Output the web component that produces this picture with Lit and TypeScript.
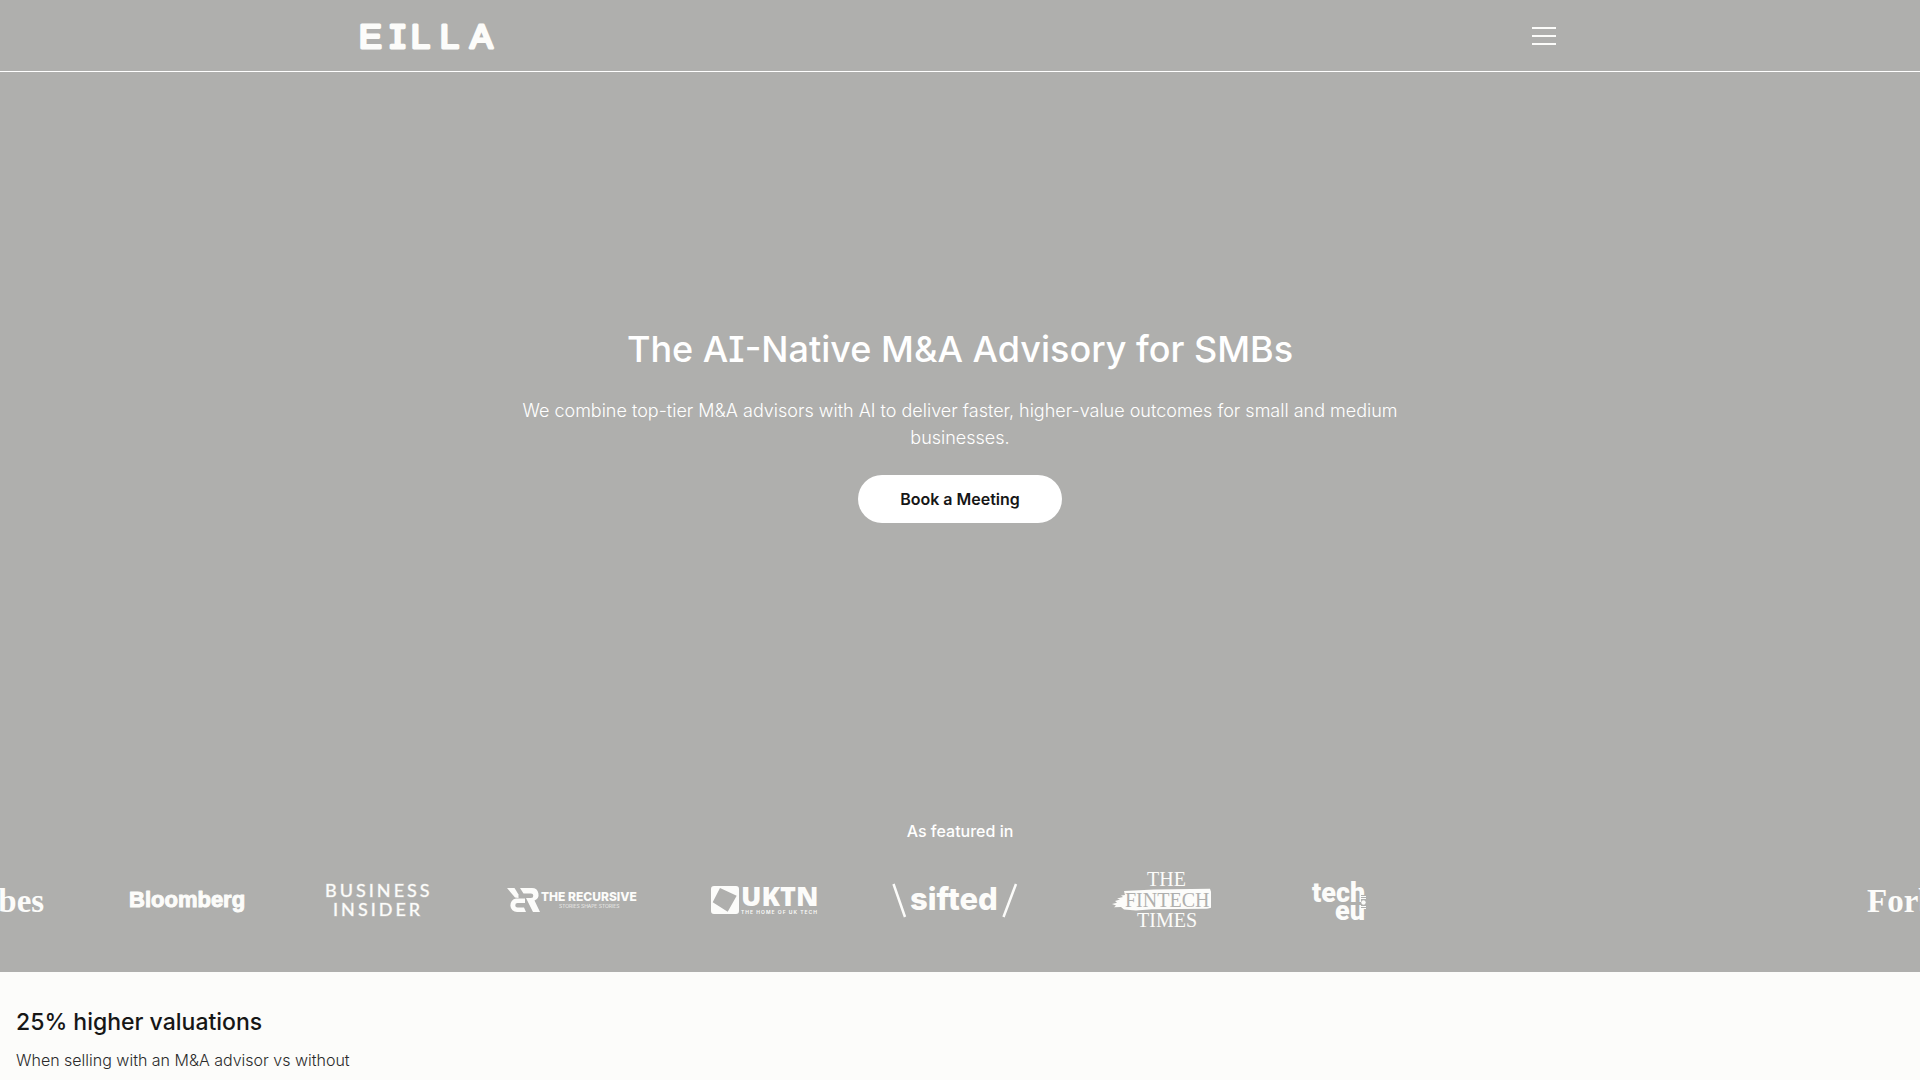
import { LitElement, html, css, svg } from "lit";
import { customElement } from "lit/decorators.js";

const logo = (label: string, body: unknown) => html`
  <svg class="logo" viewBox="0 0 192 80" role="img" aria-label=${label}>${body}</svg>
`;

const forbes = () => logo("Forbes", svg`<text class="forbes" x="48" y="52">Forbes</text>`);

const bloomberg = () => logo("Bloomberg", svg`<text class="bloomberg" x="38" y="47">Bloomberg</text>`);

const insider = () => logo("Business Insider", svg`
  <text class="insider" x="42" y="37">BUSINESS</text>
  <text class="insider" x="50" y="56">INSIDER</text>
`);

const recursive = () => logo("The Recursive", svg`
  <path d="M32 28h7.500l4 6.500v3.500l-3.500-.500z" />
  <path d="M45 28h12a6.500 6.500 0 0 1 2.500 12.500l5.500 11.500h-7l-7-14h5a2.300 2.300 0 0 0 0-4.600h-7.500z" />
  <path d="M41 38.500h9v4.500h-7.500a2 2 0 0 0 0 4.500h6.500l2 4.500h-9a6.800 6.800 0 0 1-1-13.500z" />
  <text class="recursive" x="66" y="41">THE RECURSIVE</text>
  <text class="recursive-sub" x="84" y="48">STORIES SHAPE STORIES</text>
`);

const uktn = () => logo("UKTN", svg`
  <path fill-rule="evenodd" d="M47 26h22a3 3 0 0 1 3 3v22a3 3 0 0 1-3 3H47a3 3 0 0 1-3-3V29a3 3 0 0 1 3-3zM53 28l-7.300 14.300 15 9.400 9-16z" />
  <text class="uktn" x="74" y="46">UKTN</text>
  <text class="uktn-sub" x="74" y="54">THE HOME OF UK TECH</text>
`);

const sifted = () => logo("Sifted", svg`
  <path class="slash" d="M34.500 24L46 57M157 24L144.500 57" />
  <text class="sifted" x="51" y="50">sifted</text>
`);

const fintech = () => logo("The Fintech Times", svg`
  <text class="fintech" x="96" y="26">THE</text>
  <path d="M73 31l30-1.500 56-.700 1 3v16l-4 1-55 .500-16 1.200-12-1-3-2.500-7 .300 2-1.800-4-1.500 5-1.300-2-1.700 5-1.500-3-1 6-1.500-2-1.500 4-.500z" />
  <text class="fintech knockout" x="74" y="47">FINTECH</text>
  <text class="fintech" x="86" y="67">TIMES</text>
`);

const techeu = () => logo("Tech.eu", svg`
  <text class="techeu" x="69" y="42">tech</text>
  <text class="techeu" x="92" y="60">eu</text>
  <path class="knockout" d="M118 35h6v14h-6z" />
  <path d="M118 36h5v1h-5zM118 38h5v1h-5zM118 46h5v1h-5zM118 48h5v1h-5z" />
  <circle cx="120.500" cy="42.500" r="2.200" />
`);

@customElement("app-root")
export class AppRoot extends LitElement {
  static styles = css`
    :host {
      --stone: #afafad;
      --paper: #fcfcfa;
      --ink: #161616;
      display: block;
      font-family: Inter, "Liberation Sans", sans-serif;
      color: var(--ink);
      background: var(--paper);
      height: 100vh;
      overflow: hidden;
    }
    .hero {
      display: flex;
      flex-direction: column;
      min-height: 90vh;
      background: var(--stone);
      color: #fff;
      overflow: hidden;
    }
    .bar {
      border-bottom: 1px solid #fff;
    }
    .bar-inner {
      display: flex;
      align-items: center;
      justify-content: space-between;
      max-width: 1200px;
      height: 71px;
      margin: 0 auto;
    }
    .brand {
      display: block;
      height: 32px;
    }
    .wordmark {
      display: block;
      width: 144px;
      height: 32px;
      overflow: visible;
    }
    .wordmark-text {
      font: 400 34px "Liberation Sans", sans-serif;
      fill: var(--paper);
      stroke: var(--paper);
      stroke-width: 3px;
      stroke-linejoin: round;
    }
    .slab {
      font: 400 32px "DejaVu Sans Mono", monospace;
    }
    .menu {
      display: flex;
      padding: 4px;
      border: 0;
      background: none;
      color: var(--paper);
      cursor: pointer;
    }
    .menu-icon {
      width: 24px;
      height: 24px;
      fill: currentColor;
    }
    .pitch {
      flex: 1;
      display: flex;
      flex-direction: column;
      align-items: center;
      justify-content: center;
      gap: 24px;
      padding: 0 16px 4px;
      text-align: center;
    }
    .title {
      margin: 0;
      font-size: 36px;
      line-height: 48px;
      font-weight: 500;
      font-feature-settings: "cv08";
    }
    .lead {
      margin: 0;
      max-width: 896px;
      font-size: 18px;
      line-height: 27px;
      font-weight: 300;
    }
    .cta {
      display: flex;
      align-items: center;
      height: 48px;
      padding: 0 42px;
      border-radius: 24px;
      background: #fff;
      color: var(--ink);
      font-size: 16px;
      font-weight: 600;
      text-decoration: none;
    }
    .featured {
      display: flex;
      flex-direction: column;
      gap: 17px;
      padding: 40px 0 32px;
    }
    .featured-label {
      margin: 0;
      font-size: 16px;
      line-height: 24px;
      font-weight: 500;
      text-align: center;
    }
    .logos {
      display: grid;
      grid-template-columns: repeat(11, 10%);
      margin: 0 0 0 -101px;
      padding: 0;
      width: 100%;
      list-style: none;
    }
    .slot {
      display: flex;
      justify-content: center;
      height: 80px;
    }
    .logo {
      flex: none;
      width: 192px;
      height: 80px;
      fill: var(--paper);
    }
    .forbes {
      font: 700 33px "Liberation Serif", serif;
    }
    .bloomberg {
      font: 700 22px "Liberation Sans", sans-serif;
      stroke: var(--paper);
      stroke-width: 1px;
      stroke-linejoin: round;
    }
    .insider {
      font: 500 18px Lato, sans-serif;
      letter-spacing: 3px;
      stroke: var(--paper);
      stroke-width: 1px;
      stroke-opacity: 0.3;
    }
    .recursive {
      font: 800 12px Inter, sans-serif;
    }
    .recursive-sub {
      font: 300 5px Inter, sans-serif;
    }
    .uktn {
      font: 800 27px "Open Sans", sans-serif;
    }
    .uktn-sub {
      font: 600 5px Inter, sans-serif;
      letter-spacing: 1px;
    }
    .slash {
      fill: none;
      stroke: var(--paper);
      stroke-width: 2.5px;
    }
    .sifted {
      font: 800 31px Inter, sans-serif;
    }
    .fintech {
      font: 400 20px "Liberation Serif", serif;
    }
    .knockout {
      fill: var(--stone);
    }
    .techeu {
      font: 900 27px Roboto, sans-serif;
    }
    .stat {
      display: flex;
      flex-direction: column;
      gap: 8px;
      padding: 32px 16px;
    }
    .stat-title {
      margin: 0;
      font-size: 23px;
      line-height: 36px;
      font-weight: 500;
    }
    .stat-text {
      margin: 0;
      font-size: 16px;
      line-height: 24px;
      font-weight: 300;
      color: #2b2b2b;
    }
  `;

  render() {
    const slots = [forbes, bloomberg, insider, recursive, uktn, sifted, fintech, techeu, null, null, forbes];
    return html`
      <section class="hero">
        <header class="bar">
          <div class="bar-inner">
            <a class="brand" href="#" aria-label="EILLA">
              <svg class="wordmark" viewBox="0 0 144 32">
                <text class="wordmark-text" y="28"
                  ><tspan x="-1">E</tspan><tspan class="slab" x="28">I</tspan><tspan x="51">L</tspan
                  ><tspan x="80">L</tspan><tspan x="110">A</tspan></text
                >
              </svg>
            </a>
            <button class="menu" type="button" aria-label="Menu">
              <svg class="menu-icon" viewBox="0 0 24 24">
                <path d="M0 3h24v2H0zM0 11h24v2H0zM0 19h24v2H0z" />
              </svg>
            </button>
          </div>
        </header>
        <div class="pitch">
          <h1 class="title">The AI-Native M&amp;A Advisory for SMBs</h1>
          <p class="lead">
            We combine top-tier M&amp;A advisors with AI to deliver faster, higher-value outcomes for small and medium
            businesses.
          </p>
          <a class="cta" href="#book">Book a Meeting</a>
        </div>
        <div class="featured">
          <p class="featured-label">As featured in</p>
          <ul class="logos">
            ${slots.map((draw) => html`<li class="slot">${draw ? draw() : null}</li>`)}
          </ul>
        </div>
      </section>
      <section class="stat">
        <h2 class="stat-title">25% higher valuations</h2>
        <p class="stat-text">When selling with an M&amp;A advisor vs without</p>
      </section>
    `;
  }
}
